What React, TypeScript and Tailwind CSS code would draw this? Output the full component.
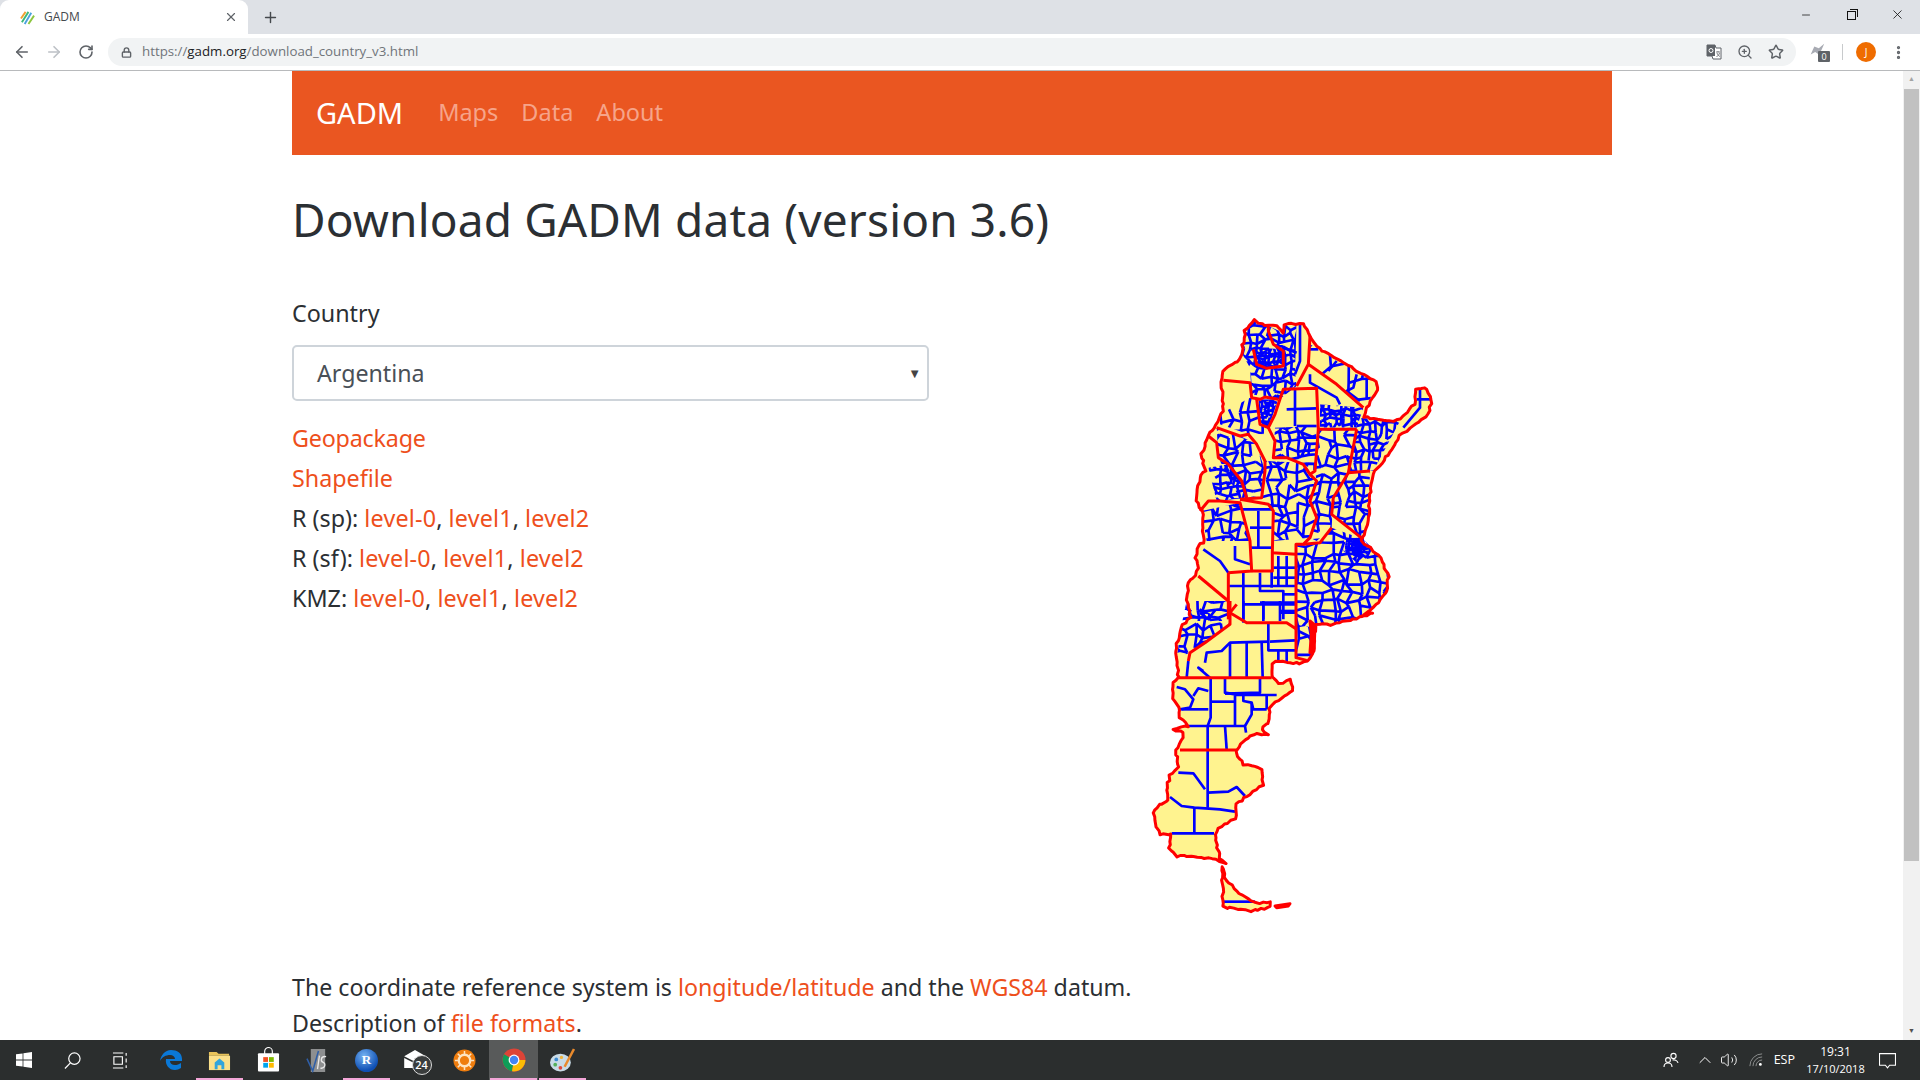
import React from "react";
import {
  ArrowLeft,
  ArrowRight,
  ChevronUp,
  EllipsisVertical,
  Lock,
  Minus,
  Plus,
  RotateCw,
  Star,
  Volume2,
  X,
  ZoomIn,
} from "lucide-react";

type Pt = [number, number];

// the map is traced in 3x pixels, south part has its own y origin
const south = (pts: Pt[]): Pt[] => pts.map(([x, y]) => [x, y + 870]);
const pts = (p: Pt[]) => p.map(([x, y]) => `${x},${y}`).join(" ");

// raster maps have a frayed edge, so break long segments up a bit
function rough(p: Pt[], seed: number): Pt[] {
  let s = seed * 4001 + 17;
  const rnd = () => {
    s = (s * 16807) % 2147483647;
    return (s % 1000) / 1000 - 0.5;
  };
  const out: Pt[] = [];
  p.forEach(([x, y], i) => {
    const [nx, ny] = p[(i + 1) % p.length];
    const n = Math.max(1, Math.round(Math.hypot(nx - x, ny - y) / 11));
    for (let k = 0; k < n; k++) {
      const t = k / n;
      out.push([x + (nx - x) * t + rnd() * 6, y + (ny - y) * t + rnd() * 6]);
    }
  });
  return out;
}

const outlineRaw: Pt[] = [
  [345, 28], [365, 40], [385, 45], [410, 45], [430, 65], [435, 40], [490, 38], [510, 75], [530, 105], [565, 130],
  [605, 148], [650, 180], [710, 215], [712, 240], [680, 290], [670, 318], [720, 325], [750, 332], [780, 325],
  [825, 280], [828, 235], [855, 228], [875, 265], [865, 310], [800, 360], [785, 365], [745, 430], [700, 490],
  [690, 550], [685, 630], [665, 690], [725, 740], [745, 800], [740, 840], [700, 890], [660, 920],
  ...south([
    [700, 35], [640, 55], [580, 72], [530, 70], [522, 100], [520, 150], [505, 178], [480, 188], [430, 180],
    [405, 178], [395, 190], [400, 230], [418, 250], [450, 235], [460, 270], [425, 290], [390, 320], [385, 365],
    [365, 385], [385, 400], [340, 400], [300, 430], [288, 455], [310, 490], [368, 503], [368, 550], [330, 580],
    [290, 610], [285, 655], [235, 680], [225, 710], [240, 770], [260, 785], [195, 770], [110, 765], [88, 740],
    [95, 700], [60, 700], [45, 670], [42, 625], [85, 595], [78, 570], [90, 525], [115, 500], [108, 450],
    [125, 420], [130, 395], [102, 385], [145, 375], [118, 350], [120, 325], [100, 290], [100, 245], [115, 230],
    [110, 170], [108, 140], [128, 70], [150, 50], [140, 0],
  ]),
  [145, 815], [165, 795], [175, 770], [165, 740], [175, 705], [190, 695], [190, 610], [170, 570], [180, 490],
  [195, 480], [185, 430], [205, 375], [225, 350], [240, 310], [250, 300], [245, 210], [250, 180], [300, 145],
  [305, 125], [315, 60],
];
const outline = rough(outlineRaw, 3);

const fuego: Pt[] = rough(south([[245, 795], [255, 830], [290, 870], [345, 905], [390, 905], [385, 922], [335, 930], [250, 918]]), 5);
const island: Pt[] = south([[405, 915], [450, 908], [445, 915], [410, 920]]);

const redLines: Pt[][] = [
  [[340, 115], [350, 160], [380, 172], [430, 165], [430, 120], [400, 100], [385, 60], [385, 45]],
  [[250, 208], [330, 215], [335, 260], [360, 265], [375, 258], [415, 265]],
  [[350, 265], [360, 340], [385, 350], [405, 310], [418, 270], [430, 235], [530, 232], [535, 355], [650, 355]],
  [[510, 75], [505, 160], [470, 225]],
  [[505, 160], [590, 220], [670, 290]],
  [[535, 355], [525, 480], [510, 490], [490, 460], [440, 440], [400, 440], [405, 390], [385, 350]],
  [[230, 350], [300, 375], [325, 370], [350, 400], [375, 450], [375, 480], [365, 560], [300, 565]],
  [[205, 375], [230, 395], [235, 440], [265, 460], [305, 510], [320, 560]],
  [[180, 600], [205, 570], [240, 570], [300, 575], [330, 690], [335, 780], [265, 785]],
  [[300, 565], [385, 580], [400, 600], [397, 725], [468, 730]],
  [[510, 490], [530, 510], [510, 570], [530, 620], [510, 680], [490, 700], [468, 700], [468, 1040], [500, 1048]],
  [[650, 355], [625, 485], [690, 480]],
  [[625, 485], [580, 560], [575, 610], [670, 685]],
  [[575, 650], [540, 695], [490, 700]],
  [[397, 725], [397, 780], [335, 780]],
  [[265, 785], [265, 925]],
  [[175, 795], [265, 870]],
  ...[
    [[270, 0], [270, 70], [195, 125], [150, 155], [145, 180]],
    [[290, 10], [270, 35], [320, 65], [440, 65], [470, 85]],
    [[115, 230], [395, 230]],
    [[120, 447], [290, 447]],
  ].map((l) => south(l as Pt[])),
];

const clots: Pt[][] = [south([[510, 60], [522, 70], [524, 100], [522, 150], [510, 155], [514, 100]])];

const blueLines: Pt[][] = [
  [[465, 235], [465, 345]], [[440, 295], [530, 292]], [[470, 345], [530, 345]], [[470, 380], [530, 380]],
  [[265, 825], [465, 825]], [[310, 785], [310, 925]], [[360, 785], [360, 840], [430, 840], [430, 925]],
  [[360, 875], [465, 875]], [[395, 780], [395, 830]], [[415, 735], [415, 825]], [[440, 735], [440, 825]],
  [[400, 770], [465, 770]], [[400, 800], [465, 800]], [[430, 850], [465, 850]], [[370, 875], [370, 925]],
  [[420, 905], [465, 905]],
  [[305, 595], [400, 595]], [[355, 600], [355, 710]], [[395, 650], [330, 650]], [[330, 710], [395, 710]],
  [[285, 705], [285, 745], [330, 760]], [[190, 715], [240, 750], [265, 785]],
  [[510, 115], [535, 115]], [[565, 180], [590, 150]], [[650, 190], [640, 230], [620, 240], [660, 270]],
  [[680, 200], [680, 265]], [[510, 190], [510, 215], [590, 260], [600, 280]],
  [[480, 40], [480, 150], [465, 190]], [[430, 110], [470, 125]],
  [[840, 235], [840, 290], [790, 350]], [[830, 265], [870, 265]],
  ...[
    [[110, 258], [135, 265], [160, 295], [150, 320], [120, 325]], [[160, 285], [175, 262], [205, 270]],
    [[212, 232], [212, 350], [203, 375], [203, 620]], [[255, 232], [255, 275], [285, 280], [285, 375]],
    [[212, 302], [285, 302]], [[360, 232], [360, 275], [255, 278]], [[285, 282], [410, 282]],
    [[310, 282], [310, 300], [335, 305], [340, 325], [380, 325]], [[380, 282], [380, 325]],
    [[335, 305], [335, 340], [315, 375], [318, 395]], [[145, 375], [315, 375]], [[255, 375], [260, 445]],
    [[125, 325], [205, 325]], [[115, 515], [160, 517], [195, 565]], [[203, 575], [265, 572], [290, 558], [315, 585]],
    [[90, 588], [125, 615], [163, 620], [240, 625], [285, 632]], [[163, 620], [163, 697]], [[95, 697], [222, 697]],
    [[250, 902], [345, 902]], [[140, 230], [145, 180]], [[190, 210], [175, 200], [210, 230]],
    [[195, 185], [200, 155], [245, 150], [270, 125], [385, 122]], [[270, 125], [270, 230]], [[320, 125], [320, 230]],
    [[365, 125], [368, 230]], [[385, 65], [385, 148], [465, 148]], [[390, 122], [465, 118]], [[415, 148], [415, 180]],
    [[440, 148], [440, 185]], [[310, 0], [310, 65]], [[370, 0], [370, 60]], [[420, 0], [420, 60]], [[420, 30], [470, 30]],
    [[475, 90], [505, 105], [515, 120]], [[310, 10], [465, 10]],
  ].map((l) => south(l as Pt[])),
];

// dense department borders: jittered net clipped to each province
const regions: { poly: Pt[]; step: number }[] = [
  { poly: [[468, 700], [540, 695], [575, 650], [670, 685], [725, 740], [745, 800], [740, 840], [700, 890], [660, 920], [700, 905], [640, 925], [580, 942], [525, 940], [468, 950]], step: 27 },
  { poly: [[620, 680], [670, 680], [685, 725], [650, 755], [610, 720]], step: 9 },
  { poly: [[315, 60], [345, 28], [385, 45], [430, 65], [435, 40], [470, 40], [465, 180], [470, 225], [418, 265], [335, 250], [330, 170], [305, 125]], step: 21 },
  { poly: [[355, 265], [415, 265], [385, 350], [360, 340]], step: 11 },
  { poly: [[345, 110], [430, 115], [430, 165], [380, 172], [350, 160]], step: 15 },
  { poly: [[540, 280], [670, 290], [650, 350], [540, 350]], step: 15 },
  { poly: [[510, 100], [565, 130], [650, 180], [710, 215], [680, 290], [590, 220], [505, 160]], step: 52 },
  { poly: [[655, 320], [780, 330], [700, 480], [625, 480]], step: 20 },
  { poly: [[625, 485], [690, 480], [685, 630], [665, 680], [575, 610], [580, 560]], step: 23 },
  { poly: [[535, 355], [650, 355], [625, 485], [580, 560], [575, 650], [530, 690], [510, 680], [530, 620], [510, 570], [530, 510], [525, 480]], step: 28 },
  { poly: [[405, 350], [530, 345], [525, 480], [490, 460], [440, 440], [400, 440]], step: 23 },
  { poly: [[375, 450], [490, 455], [530, 510], [510, 570], [530, 620], [510, 680], [400, 690], [400, 600], [365, 560]], step: 27 },
  { poly: [[230, 350], [300, 375], [350, 400], [375, 480], [365, 560], [300, 565], [235, 440]], step: 27 },
  { poly: [[240, 310], [330, 260], [350, 265], [360, 340], [400, 370], [325, 370], [240, 340]], step: 32 },
  { poly: [[205, 470], [265, 460], [305, 510], [320, 560], [230, 570]], step: 18 },
  { poly: [[185, 600], [300, 575], [330, 690], [200, 690]], step: 28 },
  ...[
    { poly: [[140, 0], [270, 70], [195, 125], [150, 155], [110, 170], [125, 70]] as Pt[], step: 26 },
    { poly: [[146, 0], [262, 0], [262, 60], [146, 60]] as Pt[], step: 24 },
    { poly: [[470, 70], [520, 80], [520, 175], [470, 170]] as Pt[], step: 42 },
  ].map((r) => ({ poly: south(r.poly), step: r.step })),
];

function net(poly: Pt[], step: number, seed: number) {
  let s = seed * 7919 + 13;
  const rnd = () => {
    s = (s * 16807) % 2147483647;
    return (s % 1000) / 1000;
  };
  const xs = poly.map((p) => p[0]);
  const ys = poly.map((p) => p[1]);
  const x0 = Math.min(...xs) - step;
  const y0 = Math.min(...ys) - step;
  const cols = Math.ceil((Math.max(...xs) - x0) / step) + 2;
  const rows = Math.ceil((Math.max(...ys) - y0) / step) + 2;
  const grid: Pt[][] = [];
  for (let r = 0; r < rows; r++) {
    grid.push([]);
    for (let c = 0; c < cols; c++) {
      grid[r].push([x0 + c * step + (rnd() - 0.5) * step * 0.85, y0 + r * step + (rnd() - 0.5) * step * 0.85]);
    }
  }
  let d = "";
  for (let r = 0; r < rows; r++) {
    for (let c = 0; c < cols; c++) {
      const [x, y] = grid[r][c];
      if (c + 1 < cols && rnd() > 0.15) d += `M${x} ${y}L${grid[r][c + 1][0]} ${grid[r][c + 1][1]}`;
      if (r + 1 < rows && rnd() > 0.15) d += `M${x} ${y}L${grid[r + 1][c][0]} ${grid[r + 1][c][1]}`;
    }
  }
  return d;
}

function ArgentinaMap() {
  return (
    <svg viewBox="0 0 960 1860" className="w-[320px] h-[620px] shrink-0 block">
      <defs>
        {regions.map((r, i) => (
          <clipPath key={i} id={`prov-${i}`}>
            <polygon points={pts(r.poly)} />
          </clipPath>
        ))}
      </defs>
      <polygon points={pts(outline)} fill="#fff38f" />
      <polygon points={pts(fuego)} fill="#fff38f" />
      <g fill="none" stroke="#0000ff" strokeWidth="8" strokeLinejoin="round">
        {regions.map((r, i) => (
          <path key={i} d={net(r.poly, r.step, i + 1)} clipPath={`url(#prov-${i})`} />
        ))}
        {blueLines.map((l, i) => (
          <polyline key={i} points={pts(l)} />
        ))}
      </g>
      <g fill="none" stroke="#ff0000" strokeWidth="9" strokeLinejoin="round">
        {redLines.map((l, i) => (
          <polyline key={i} points={pts(l)} />
        ))}
        <polygon points={pts(outline)} />
        <polygon points={pts(fuego)} />
        <polygon points={pts(island)} fill="#ff0000" />
        {clots.map((l, i) => (
          <polygon key={i} points={pts(l)} fill="#ff0000" />
        ))}
      </g>
    </svg>
  );
}

function Favicon() {
  return (
    <svg viewBox="0 0 16 16" className="w-[15px] h-[15px]">
      <path d="M1 9 L6 2" stroke="#f0a030" strokeWidth="2" />
      <path d="M2 13 L9 2" stroke="#3cb878" strokeWidth="2" />
      <path d="M5 15 L12 3" stroke="#4aa3df" strokeWidth="2" />
      <path d="M9 15 L15 6" stroke="#8cc63f" strokeWidth="2" />
    </svg>
  );
}

function Lnk({ children }: { children: React.ReactNode }) {
  return <a className="text-[#ee4f1c]">{children}</a>;
}

function LevelRow({ label }: { label: string }) {
  return (
    <div>
      {label}{" "}
      <a className="text-[#ee4f1c] tracking-[0.2px]">level-0</a>, <a className="text-[#ee4f1c] tracking-[0.2px]">level1</a>,{" "}
      <a className="text-[#ee4f1c] tracking-[0.2px]">level2</a>
    </div>
  );
}

function TaskIcon({ children, active, open }: { children: React.ReactNode; active?: boolean; open?: boolean }) {
  return (
    <div className={`relative w-[49px] h-10 flex items-center justify-center ${active ? "bg-[#585a5a]" : ""}`}>
      {children}
      {open && <div className="absolute bottom-0 left-[1px] right-[1px] h-[2px] bg-[#f3a6d8]" />}
    </div>
  );
}

export default function App() {
  return (
    <div className="h-screen w-full overflow-hidden flex flex-col bg-white font-['Open_Sans',sans-serif]">
      {/* tab strip */}
      <div className="h-[34px] shrink-0 bg-[#dee1e6] flex items-end">
        <div className="w-[248px] h-[34px] bg-white rounded-t-[9px] flex items-center pl-[20px] pr-[10px] text-[12px] text-[#45494d]">
          <Favicon />
          <span className="ml-[9px] flex-1">GADM</span>
          <X size={14} strokeWidth={2} className="text-[#5f6368]" />
        </div>
        <div className="h-[34px] flex items-center ml-[14px]">
          <Plus size={17} strokeWidth={2} className="text-[#45494d]" />
        </div>
        <div className="ml-auto h-full flex items-center text-[#111]">
          <div className="w-[46px] flex justify-center -mt-[5px]"><Minus size={12} strokeWidth={1.5} /></div>
          <div className="w-[46px] flex justify-center -mt-[5px] -ml-px">
            <div className="relative w-[9px] h-[9px] mt-[2px] border border-[#111] bg-[#dee1e6] before:content-[''] before:absolute before:-top-[3px] before:-right-[3px] before:w-[8px] before:h-[8px] before:border-t before:border-r before:border-[#111]" />
          </div>
          <div className="w-[46px] flex justify-center -mt-[5px]"><X size={15} strokeWidth={1.3} /></div>
        </div>
      </div>

      {/* toolbar */}
      <div className="h-[37px] shrink-0 bg-white border-b border-[#b8babc] flex items-center">
        <ArrowLeft size={18} strokeWidth={2.2} className="ml-[13px] text-[#5f6368]" />
        <ArrowRight size={18} strokeWidth={2.2} className="ml-[14px] text-[#bdc1c6]" />
        <RotateCw size={16} strokeWidth={2.4} className="ml-[15px] text-[#5f6368]" />
        <div className="ml-[14px] w-[1688px] h-[28px] bg-[#f1f3f4] rounded-full flex items-center pl-[13px] pr-[12px] text-[13.3px]">
          <Lock size={11} strokeWidth={3} className="text-[#5f6368]" />
          <span className="ml-[10px] text-[#70757a]">
            https://<span className="text-[#202124]">gadm.org</span>/download_country_v3.html
          </span>
          <div className="ml-auto flex items-center gap-[15px] text-[#5f6368]">
            <svg viewBox="0 0 16 16" className="w-[16px] h-[16px]">
              <path d="M1 1H9L10 4H15V15H7L6 12H1Z" fill="#fff" stroke="#5f6368" />
              <rect x="1" y="1" width="8" height="11" fill="#5f6368" />
              <circle cx="5" cy="6.5" r="2" fill="none" stroke="#fff" />
              <path d="M10 8H14M12 7V8M11 9C11.5 11 13 12 14 12.5M13.5 9C13 11 12 12 10.5 12.5" fill="none" stroke="#5f6368" strokeWidth="0.8" />
            </svg>
            <ZoomIn size={16} strokeWidth={2} />
            <Star size={16} strokeWidth={2.2} />
          </div>
        </div>
        <div className="relative ml-[12px] w-[22px] h-[20px]">
          <svg viewBox="0 0 20 20" className="w-[18px] h-[18px]">
            <path d="M3 14 L7 5 L12 7 L18 2 L15 9 L12 14 L8 11 Z" fill="#a8abb3" />
          </svg>
          <div className="absolute right-0 bottom-0 w-[12px] h-[11px] bg-[#5f6368] rounded-[1px] text-[9px] leading-[11px] text-center text-white">0</div>
        </div>
        <div className="ml-[12px] w-px h-[16px] bg-[#c8cacc]" />
        <div className="ml-[13px] w-[20px] h-[20px] rounded-full bg-[#ef6c00] text-white text-[10px] flex items-center justify-center">J</div>
        <EllipsisVertical size={17} strokeWidth={2.6} className="ml-[14px] text-[#5f6368]" />
      </div>

      {/* page + scrollbar */}
      <div className="flex-1 min-h-0 flex overflow-hidden">
        <div className="flex-1 min-w-0 overflow-hidden pl-[292px] font-['Noto_Sans',sans-serif] text-[#2b2f33]">
          <div className="w-[1320px] h-[84px] bg-[#ea5621] flex items-center pl-[24px]">
            <span className="text-white text-[29px]">GADM</span>
            <div className="flex gap-[23px] ml-[35px] text-[23.5px] text-[#f6a48a]">
              <span>Maps</span>
              <span>Data</span>
              <span>About</span>
            </div>
          </div>
          <h1 className="mt-[32px] text-[46px] leading-[64px] tracking-[0.15px]">Download GADM data (version 3.6)</h1>
          <div className="flex mt-[37px]">
            <div className="w-[637px] shrink-0 text-[23.3px] leading-[40px] pt-[5px]">
              <div>Country</div>
              <div className="mt-[12px] h-[56px] border-2 border-[#ced4da] rounded-[5px] flex items-center pl-[23px] pr-[6px] text-[#495057] text-[23.2px]">
                <span className="flex-1">Argentina</span>
                <span className="text-[13px] text-[#444]">▼</span>
              </div>
              <div className="mt-[17px] tracking-[-0.2px]"><Lnk>Geopackage</Lnk></div>
              <div><Lnk>Shapefile</Lnk></div>
              <LevelRow label="R (sp):" />
              <LevelRow label="R (sf):" />
              <LevelRow label="KMZ:" />
            </div>
            <div className="ml-[211px] mt-[23px]">
              <ArgentinaMap />
            </div>
          </div>
          <div className="mt-[38px] text-[23.2px] leading-[36px]">
            <div>
              The coordinate reference system is <Lnk>longitude/latitude</Lnk> and the <Lnk>WGS84</Lnk> datum.
            </div>
            <div>
              Description of <Lnk>file formats</Lnk>.
            </div>
          </div>
        </div>
        <div className="w-[17px] shrink-0 bg-[#f1f1f1] flex flex-col items-center">
          <div className="h-[17px] w-full flex items-center justify-center text-[#a3a3a3] text-[7px]">▲</div>
          <div className="mt-[1px] h-[772px] w-[15px] bg-[#c1c1c1]" />
          <div className="mt-auto h-[17px] w-full flex items-center justify-center text-[#505050] text-[7px]">▼</div>
        </div>
      </div>

      {/* windows taskbar */}
      <div className="h-10 shrink-0 bg-[#2b2e2e] flex items-center text-white">
        <div className="w-[48px] flex justify-center">
          <svg viewBox="0 0 16 16" className="w-[16px] h-[16px]" fill="#fff">
            <path d="M0 2.3 6.6 1.4V7.6H0ZM7.4 1.3 16 0V7.6H7.4ZM0 8.4H6.6V14.6L0 13.7ZM7.4 8.4H16V16L7.4 14.7Z" />
          </svg>
        </div>
        <div className="w-[48px] flex justify-center">
          <svg viewBox="0 0 18 18" className="w-[17px] h-[17px]" fill="none" stroke="#fff" strokeWidth="1.3">
            <circle cx="11" cy="7" r="6" />
            <path d="M6.8 11.5 1 17.5" />
          </svg>
        </div>
        <div className="w-[48px] flex justify-center">
          <svg viewBox="0 0 18 18" className="w-[17px] h-[17px]" fill="none" stroke="#fff" strokeWidth="1.2">
            <path d="M1 1H12M1 17H12M2 5H11V13H2ZM15 1V4M15 7V11M15 14V17" />
          </svg>
        </div>
        <div className="w-[2px]" />
        <TaskIcon>
          <svg viewBox="0 0 24 24" className="w-[24px] h-[26px]">
            <path d="M12 2C6 2 2 7 1 13c2-4 6-6 10-6 3 0 5 2 5 4H7c-1 6 3 11 9 11 2 0 4-1 6-2v-5c-4 3-11 3-11-2h12V11C23 5 18 2 12 2Z" fill="#0a78d7" />
          </svg>
        </TaskIcon>
        <TaskIcon open>
          <svg viewBox="0 0 24 24" className="w-[23px] h-[23px]">
            <path d="M1 3H9L11 5H22V7H1Z" fill="#e8c35a" />
            <path d="M1 7H23V22H1Z" fill="#fbe08a" />
            <path d="M7 14L12 10 17 14V21H14V17H10V21H7Z" fill="#32a5dc" />
          </svg>
        </TaskIcon>
        <TaskIcon>
          <svg viewBox="0 0 24 26" className="w-[23px] h-[26px]">
            <path d="M8 7V4a4 4 0 0 1 8 0v3" fill="none" stroke="#fff" strokeWidth="1.2" />
            <rect x="1" y="6" width="22" height="19" rx="1" fill="#fff" />
            <rect x="6.5" y="10" width="5" height="5" fill="#f25022" />
            <rect x="12.5" y="10" width="5" height="5" fill="#7fba00" />
            <rect x="6.5" y="16" width="5" height="5" fill="#00a4ef" />
            <rect x="12.5" y="16" width="5" height="5" fill="#ffb900" />
          </svg>
        </TaskIcon>
        <TaskIcon>
          <svg viewBox="0 0 24 26" className="w-[23px] h-[25px]">
            <path d="M5 1H20V25H5Z" fill="#8d8f90" />
            <path d="M1 11L7 24 13 3" fill="none" stroke="#2f5fa8" strokeWidth="1.6" />
            <path d="M14 8L12 22M21 9C15 8 15 14 18 15S20 22 15 21" fill="none" stroke="#e8e8e8" strokeWidth="1.4" />
          </svg>
        </TaskIcon>
        <TaskIcon open>
          <div className="w-[23px] h-[23px] rounded-full bg-[radial-gradient(circle_at_40%_30%,#74b3f2,#0f4fb4_70%)] flex items-center justify-center text-[13px] font-['Liberation_Serif',serif] font-bold text-white">R</div>
        </TaskIcon>
        <TaskIcon>
          <div className="relative w-[26px] h-[24px]">
            <svg viewBox="0 0 24 20" className="absolute left-0 top-[2px] w-[24px] h-[18px]">
              <path d="M0 7 12 0 24 7 12 13Z M0 9 12 15 24 9V20H0Z" fill="#fff" />
            </svg>
            <div className="absolute -right-[3px] -bottom-[3px] w-[20px] h-[20px] rounded-full bg-[#3a3d3d] border border-[#ddd] text-[11px] font-semibold leading-[18px] text-center">24</div>
          </div>
        </TaskIcon>
        <TaskIcon>
          <svg viewBox="0 0 24 24" className="w-[23px] h-[23px]">
            <circle cx="12" cy="12" r="11.5" fill="#ef7d0e" />
            <circle cx="12" cy="12" r="6" fill="none" stroke="#fde3c0" strokeWidth="2.4" />
            <path d="M12 2V7M12 17V22M2 12H7M17 12H22M5 5L8 8M16 16L19 19M5 19L8 16M16 8L19 5" stroke="#fde3c0" strokeWidth="1.6" />
          </svg>
        </TaskIcon>
        <TaskIcon active open>
          <svg viewBox="0 0 24 24" className="w-[24px] h-[24px]">
            <circle cx="12" cy="12" r="11.5" fill="#dc4437" />
            <path d="M12 12 2.1 6.3A11.5 11.5 0 0 0 10 23.3Z" fill="#0f9d58" />
            <path d="M12 12H23.4A11.5 11.5 0 0 1 10 23.3Z" fill="#fbbc05" />
            <circle cx="12" cy="12" r="5.4" fill="#fff" />
            <circle cx="12" cy="12" r="4.2" fill="#4285f4" />
          </svg>
        </TaskIcon>
        <TaskIcon open>
          <svg viewBox="0 0 24 24" className="w-[25px] h-[25px]">
            <ellipse cx="10" cy="14" rx="10" ry="8.5" fill="#c9dbe6" />
            <circle cx="6" cy="11" r="1.8" fill="#3c8ad0" />
            <circle cx="5" cy="16" r="1.8" fill="#55b05a" />
            <circle cx="10" cy="19" r="1.8" fill="#e0483e" />
            <circle cx="11" cy="9" r="1.6" fill="#f0b43a" />
            <path d="M23 1 14 18" stroke="#e98a2c" strokeWidth="2.4" />
          </svg>
        </TaskIcon>

        <div className="ml-auto flex items-center h-full">
          <svg viewBox="0 0 16 16" className="w-[16px] h-[16px]" fill="none" stroke="#fff" strokeWidth="1.1">
            <circle cx="10.5" cy="4" r="2.6" />
            <circle cx="5" cy="8" r="2.4" />
            <path d="M1 15C1 12 3 11 5 11S9 12 9 15M9.5 8C12 7.5 14.5 8.5 15 11" />
          </svg>
          <ChevronUp size={20} strokeWidth={1.2} className="ml-[16px]" />
          <Volume2 size={18} strokeWidth={1.2} className="ml-[5px]" />
          <svg viewBox="0 0 16 16" className="ml-[11px] w-[14px] h-[14px]" fill="none" stroke="#8f9191" strokeWidth="1.1">
            <path d="M1 15A14 14 0 0 1 15 1M4.5 15A10.5 10.5 0 0 1 15 4.5M8 15A7 7 0 0 1 15 8" />
            <circle cx="13" cy="13" r="1.6" fill="#fff" stroke="none" />
          </svg>
          <span className="ml-[11px] text-[12.5px]">ESP</span>
          <div className="ml-[5px] w-[71px] text-center text-[11px] leading-[17px]">
            <div className="text-[12px]">19:31</div>
            <div>17/10/2018</div>
          </div>
          <svg viewBox="0 0 16 16" className="ml-[8px] mr-[24px] w-[17px] h-[17px]" fill="none" stroke="#fff" strokeWidth="1">
            <path d="M.5 1.5H15.5V12.5H10L8 15 6 12.5H.5Z" />
          </svg>
        </div>
      </div>
    </div>
  );
}
